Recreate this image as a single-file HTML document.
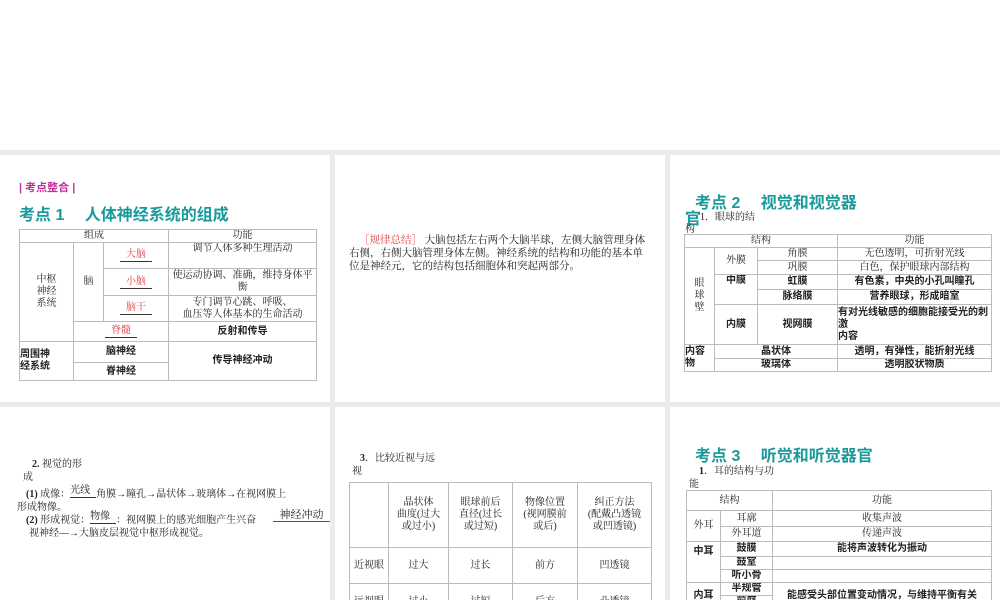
<!DOCTYPE html>
<html><head><meta charset="utf-8"><style>
*{margin:0;padding:0;box-sizing:border-box}
body{width:1000px;height:600px;background:#ebebeb;position:relative;overflow:hidden;font-family:"Liberation Serif","Noto Serif CJK SC",serif;font-size:10px;color:#222}
.p{position:absolute;background:#fff;overflow:hidden}
.a{position:absolute;white-space:nowrap}
.h{font-family:"Liberation Sans","Noto Sans CJK SC",sans-serif;font-weight:bold;color:#1a9a9a;font-size:16px}
table{position:absolute;border-collapse:collapse;table-layout:fixed}
td{border:1px solid #bbb;text-align:center;vertical-align:middle;padding:0;line-height:12px;font-size:10px;overflow:hidden}
.b{font-weight:bold;font-family:"Liberation Sans","Noto Sans CJK SC",sans-serif}
.r{color:#e04040;border-bottom:1px solid #333;display:inline-block;padding:0 6px}
</style></head><body>
<div class="p" style="left:0;top:0;width:1000px;height:150px"></div>

<div class="p" style="left:0;top:155px;width:330px;height:247px">
<div class="a" style="left:19px;top:24px;color:#c0309a;font-family:'Liberation Sans','Noto Sans CJK SC',sans-serif;font-size:11px;font-weight:bold">| 考点整合 |</div>
<div class="a h" style="left:19px;top:46px">考点 1　 人体神经系统的组成</div>
<table style="left:19px;top:74px;width:297px">
<colgroup><col style="width:54px"><col style="width:30px"><col style="width:65px"><col style="width:148px"></colgroup>
<tr style="height:13px"><td colspan="3">组成</td><td>功能</td></tr>
<tr style="height:26px"><td rowspan="4">中枢<br>神经<br>系统</td><td rowspan="3">脑</td><td><span class="r">大脑</span></td><td style="vertical-align:top">调节人体多种生理活动</td></tr>
<tr style="height:27px"><td><span class="r">小脑</span></td><td>使运动协调、准确，维持身体平衡</td></tr>
<tr style="height:26px"><td><span class="r">脑干</span></td><td>专门调节心跳、呼吸、<br>血压等人体基本的生命活动</td></tr>
<tr style="height:20px"><td colspan="2"><span class="r">脊髓</span></td><td class="b">反射和传导</td></tr>
<tr style="height:21px"><td rowspan="2" class="b" style="text-align:left">周围神<br>经系统</td><td colspan="2" class="b">脑神经</td><td rowspan="2" class="b">传导神经冲动</td></tr>
<tr style="height:18px"><td colspan="2" class="b">脊神经</td></tr>
</table>
</div>

<div class="p" style="left:335px;top:155px;width:330px;height:247px">
<div class="a" style="left:14px;top:79px;width:302px;white-space:normal;line-height:13px;font-size:10.5px;text-indent:10px"><span style="color:#e04040">［规律总结］</span> 大脑包括左右两个大脑半球，左侧大脑管理身体右侧，右侧大脑管理身体左侧。神经系统的结构和功能的基本单位是神经元，它的结构包括细胞体和突起两部分。</div>
</div>

<div class="p" style="left:670px;top:155px;width:330px;height:247px">
<div class="a h" style="left:25px;top:34px">考点 2　 视觉和视觉器</div>
<div class="a h" style="left:15px;top:50px">官</div>
<div class="a" style="left:30px;top:53px">1．眼球的结</div>
<div class="a" style="left:15px;top:65px">构</div>
<table style="left:14px;top:79px;width:307px">
<colgroup><col style="width:30px"><col style="width:43px"><col style="width:80px"><col style="width:154px"></colgroup>
<tr style="height:13px"><td colspan="3">结构</td><td>功能</td></tr>
<tr style="height:13px"><td rowspan="5">眼<br>球<br>壁</td><td rowspan="2">外膜</td><td>角膜</td><td>无色透明，可折射光线</td></tr>
<tr style="height:14px"><td>巩膜</td><td>白色，保护眼球内部结构</td></tr>
<tr style="height:15px"><td rowspan="2" class="b" style="vertical-align:top">中膜</td><td class="b">虹膜</td><td class="b">有色素，中央的小孔叫瞳孔</td></tr>
<tr style="height:15px"><td class="b">脉络膜</td><td class="b">营养眼球，形成暗室</td></tr>
<tr style="height:40px"><td class="b">内膜</td><td class="b">视网膜</td><td class="b" style="text-align:left">有对光线敏感的细胞能接受光的刺激<br>内容</td></tr>
<tr style="height:14px"><td rowspan="2" class="b" style="text-align:left">内容<br>物</td><td colspan="2" class="b">晶状体</td><td class="b">透明，有弹性，能折射光线</td></tr>
<tr style="height:13px"><td colspan="2" class="b">玻璃体</td><td class="b">透明胶状物质</td></tr>
</table>
</div>

<div class="p" style="left:0;top:407px;width:330px;height:193px">
<div class="a" style="left:32px;top:48px"><b>2.</b> 视觉的形</div>
<div class="a" style="left:23px;top:61px">成</div>
<div class="a" style="left:26px;top:78px"><b>(1)</b> 成像：<span style="display:inline-block;position:relative;width:26px;border-bottom:1px solid #333;height:6px;vertical-align:middle"><span style="position:absolute;top:-11px;left:0">光线</span></span>角膜→瞳孔→晶状体→玻璃体→在视网膜上</div>
<div class="a" style="left:17px;top:91px">形成物像。</div>
<div class="a" style="left:26px;top:104px"><b>(2)</b> 形成视觉：<span style="display:inline-block;position:relative;width:26px;border-bottom:1px solid #333;height:6px;vertical-align:middle"><span style="position:absolute;top:-11px;left:0">物像</span></span>：视网膜上的感光细胞产生兴奋</div>
<div class="a" style="left:273px;top:102px;width:57px;border-bottom:1px solid #555;font-size:11px;line-height:12px;text-align:center">神经冲动</div>
<div class="a" style="left:29px;top:117px">视神经—→大脑皮层视觉中枢形成视觉。</div>
</div>

<div class="p" style="left:335px;top:407px;width:330px;height:193px">
<div class="a" style="left:25px;top:42px"><b>3</b>．比较近视与远</div>
<div class="a" style="left:17px;top:55px">视</div>
<table style="left:14px;top:75px;width:302px">
<colgroup><col style="width:39px"><col style="width:60px"><col style="width:64px"><col style="width:65px"><col style="width:74px"></colgroup>
<tr style="height:65px"><td></td><td>晶状体<br>曲度(过大<br>或过小)</td><td>眼球前后<br>直径(过长<br>或过短)</td><td>物像位置<br>(视网膜前<br>或后)</td><td>纠正方法<br>(配戴凸透镜<br>或凹透镜)</td></tr>
<tr style="height:36px"><td>近视眼</td><td>过大</td><td>过长</td><td>前方</td><td>凹透镜</td></tr>
<tr style="height:36px"><td>远视眼</td><td>过小</td><td>过短</td><td>后方</td><td>凸透镜</td></tr>
</table>
</div>

<div class="p" style="left:670px;top:407px;width:330px;height:193px">
<div class="a h" style="left:25px;top:35px">考点 3　 听觉和听觉器官</div>
<div class="a" style="left:29px;top:55px"><b>1</b>．耳的结构与功</div>
<div class="a" style="left:19px;top:68px">能</div>
<table style="left:16px;top:83px;width:305px">
<colgroup><col style="width:34px"><col style="width:52px"><col style="width:219px"></colgroup>
<tr style="height:20px"><td colspan="2">结构</td><td>功能</td></tr>
<tr style="height:16px"><td rowspan="2">外耳</td><td>耳廓</td><td>收集声波</td></tr>
<tr style="height:15px"><td>外耳道</td><td>传递声波</td></tr>
<tr style="height:15px"><td rowspan="3" class="b" style="vertical-align:top;padding-top:4px">中耳</td><td class="b">鼓膜</td><td class="b">能将声波转化为振动</td></tr>
<tr style="height:13px"><td class="b">鼓室</td><td></td></tr>
<tr style="height:13px"><td class="b">听小骨</td><td></td></tr>
<tr style="height:11px"><td rowspan="2" class="b">内耳</td><td class="b">半规管</td><td rowspan="2" class="b">能感受头部位置变动情况，与维持平衡有关</td></tr>
<tr style="height:12px"><td class="b">前庭</td></tr>
</table>
</div>
</body></html>
